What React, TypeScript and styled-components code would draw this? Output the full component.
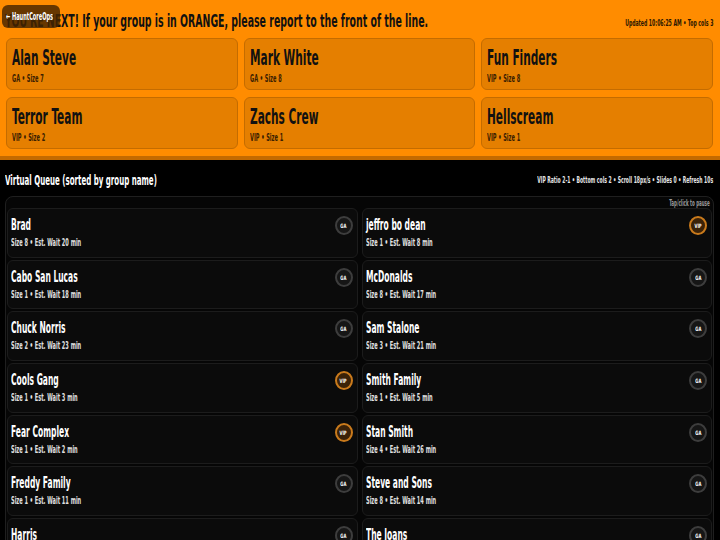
import styled, { createGlobalStyle, css } from 'styled-components';

const GlobalStyle = createGlobalStyle`
  html, body {
    margin: 0;
    padding: 0;
    background: #000;
    overflow: hidden;
    height: 540px;
  }
  body {
    font-family: "DejaVu Sans Condensed", "Liberation Sans", Arial, sans-serif;
    font-weight: 700;
  }
`;

type Group = { name: string; size: number; vip: boolean; wait?: number };

const nowServing: Group[] = [
  { name: 'Alan Steve', size: 7, vip: false },
  { name: 'Mark White', size: 8, vip: false },
  { name: 'Fun Finders', size: 8, vip: true },
  { name: 'Terror Team', size: 2, vip: true },
  { name: 'Zachs Crew', size: 1, vip: true },
  { name: 'Hellscream', size: 1, vip: true },
];

const leftQueue: Group[] = [
  { name: 'Brad', size: 8, vip: false, wait: 20 },
  { name: 'Cabo San Lucas', size: 1, vip: false, wait: 18 },
  { name: 'Chuck Norris', size: 2, vip: false, wait: 23 },
  { name: 'Cools Gang', size: 1, vip: true, wait: 3 },
  { name: 'Fear Complex', size: 1, vip: true, wait: 2 },
  { name: 'Freddy Family', size: 1, vip: false, wait: 11 },
  { name: 'Harris', size: 2, vip: false, wait: 24 },
];

const rightQueue: Group[] = [
  { name: 'jeffro bo dean', size: 1, vip: true, wait: 8 },
  { name: 'McDonalds', size: 8, vip: false, wait: 17 },
  { name: 'Sam Stalone', size: 3, vip: false, wait: 21 },
  { name: 'Smith Family', size: 1, vip: false, wait: 5 },
  { name: 'Stan Smith', size: 4, vip: false, wait: 26 },
  { name: 'Steve and Sons', size: 8, vip: false, wait: 14 },
  { name: 'The Joans', size: 5, vip: false, wait: 12 },
];

// the display font is very narrow, so squeeze the text horizontally
const narrow = (origin: 'left' | 'right' = 'left', amount = 0.56) => css`
  white-space: nowrap;
  transform: scaleX(${amount});
  transform-origin: ${origin} center;
`;

const Page = styled.div`
  width: 720px;
  position: relative;
`;

const BackButton = styled.div`
  position: absolute;
  left: 2px;
  top: 5px;
  width: 58px;
  height: 23px;
  border-radius: 6px;
  background: rgba(70, 36, 0, 0.82);
  color: #fff;
  font-size: 10px;
  display: flex;
  align-items: center;
  padding-left: 4px;
  box-sizing: border-box;
  span {
    display: inline-block;
    ${narrow()}
  }
`;

const TopBand = styled.section`
  background: #ff8c00;
  padding: 4px 7px 7px 6px;
  border-bottom: 4px solid #c46a00;
`;

const TopHeader = styled.div`
  display: flex;
  align-items: flex-end;
  justify-content: space-between;
  height: 28px;
  margin-bottom: 6px;
`;

const Banner = styled.div`
  flex: 1;
  width: 0;
  font-size: 18px;
  color: #111;
  margin-left: -1px;
  margin-bottom: 1px;
  ${narrow('left', 0.58)}
`;

const Updated = styled.div`
  flex-shrink: 0;
  font-size: 9.5px;
  color: #2a1600;
  padding-bottom: 4px;
  ${narrow('right', 0.54)}
`;

const CardGrid = styled.div`
  display: grid;
  grid-template-columns: repeat(3, 1fr);
  gap: 7px 6px;
`;

const Card = styled.div`
  background: #e57f00;
  border: 1px solid #c46c00;
  border-radius: 6px;
  height: 52px;
  box-sizing: border-box;
  padding: 8px 5px 0;
`;

const CardName = styled.div`
  font-size: 21px;
  line-height: 22px;
  color: #111;
  ${narrow()}
`;

const CardMeta = styled.div`
  font-size: 10px;
  color: #3a2000;
  margin-top: 4px;
  ${narrow()}
`;

const QueueHeader = styled.div`
  display: flex;
  align-items: center;
  justify-content: space-between;
  height: 36px;
  padding: 4px 7px 0 5px;
  box-sizing: border-box;
`;

const QueueTitle = styled.div`
  font-size: 14px;
  color: #fff;
  ${narrow()}
`;

const QueueStats = styled.div`
  font-size: 9px;
  color: #e6e6e6;
  ${narrow('right')}
`;

const Panel = styled.div`
  margin: 0 6px 0 5px;
  border: 1px solid #1f1f1f;
  border-radius: 8px;
  background: #060606;
  padding: 2px 1px 0 1px;
`;

const PauseHint = styled.div`
  text-align: right;
  font-size: 8px;
  color: #9a9a9a;
  padding-right: 4px;
  height: 9px;
  ${narrow('right')}
`;

const Columns = styled.div`
  display: grid;
  grid-template-columns: 1fr 1fr;
  gap: 4px;
`;

const Column = styled.div`
  display: flex;
  flex-direction: column;
  gap: 2px;
`;

const Row = styled.div`
  height: 49.67px;
  box-sizing: border-box;
  background: #0b0b0b;
  border: 1px solid #1c1c1c;
  border-radius: 6px;
  padding: 6px 4px 0 3px;
  display: flex;
  justify-content: space-between;
`;

const RowText = styled.div`
  display: flex;
  flex-direction: column;
`;

const RowName = styled.div`
  font-size: 15px;
  line-height: 20px;
  color: #fff;
  ${narrow()}
`;

const RowMeta = styled.div`
  font-size: 10px;
  color: #e0e0e0;
  margin-top: 2px;
  ${narrow()}
`;

const Badge = styled.div<{ $vip: boolean }>`
  width: 18px;
  height: 19px;
  box-sizing: border-box;
  border-radius: 50%;
  border: 2px solid ${(p) => (p.$vip ? '#c97a1c' : '#3d3d3d')};
  background: ${(p) => (p.$vip ? '#3b2208' : '#161616')};
  color: #fff;
  font-size: 6px;
  display: flex;
  align-items: center;
  justify-content: center;
  margin-top: 1px;
  span {
    display: inline-block;
    transform: scaleX(0.7);
  }
`;

function QueueRow({ group }: { group: Group }) {
  return (
    <Row>
      <RowText>
        <RowName>{group.name}</RowName>
        <RowMeta>
          Size {group.size} • Est. Wait {group.wait} min
        </RowMeta>
      </RowText>
      <Badge $vip={group.vip}>
        <span>{group.vip ? 'VIP' : 'GA'}</span>
      </Badge>
    </Row>
  );
}

export default function App() {
  return (
    <Page>
      <GlobalStyle />
      <TopBand>
        <TopHeader>
          <Banner>YOU'RE NEXT! If your group is in ORANGE, please report to the front of the line.</Banner>
          <Updated>Updated 10:06:25 AM • Top cols 3</Updated>
        </TopHeader>
        <CardGrid>
          {nowServing.map((g) => (
            <Card key={g.name}>
              <CardName>{g.name}</CardName>
              <CardMeta>
                {g.vip ? 'VIP' : 'GA'} • Size {g.size}
              </CardMeta>
            </Card>
          ))}
        </CardGrid>
      </TopBand>

      <QueueHeader>
        <QueueTitle>Virtual Queue (sorted by group name)</QueueTitle>
        <QueueStats>VIP Ratio 2-1 • Bottom cols 2 • Scroll 18px/s • Slides 0 • Refresh 10s</QueueStats>
      </QueueHeader>

      <Panel>
        <PauseHint>Tap/click to pause</PauseHint>
        <Columns>
          <Column>
            {leftQueue.map((g) => (
              <QueueRow key={g.name} group={g} />
            ))}
          </Column>
          <Column>
            {rightQueue.map((g) => (
              <QueueRow key={g.name} group={g} />
            ))}
          </Column>
        </Columns>
      </Panel>

      <BackButton>
        <span>← HauntCoreOps</span>
      </BackButton>
    </Page>
  );
}
